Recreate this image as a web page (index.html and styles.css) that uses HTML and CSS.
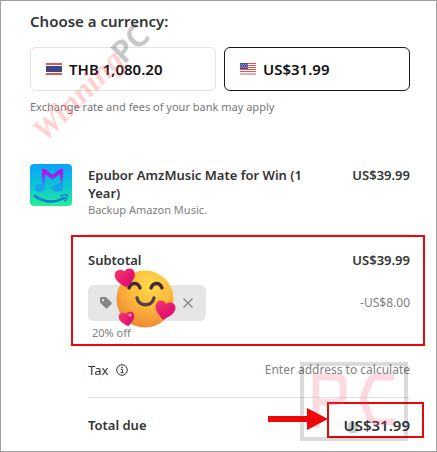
FILE: index.html
```html
<!DOCTYPE html>
<html lang="en">
<head>
<meta charset="utf-8">
<title>Order summary</title>
<link rel="stylesheet" href="styles.css">
</head>
<body>
<main class="checkout">
  <h1 class="heading">Choose a currency:</h1>
  <div class="currencies">
    <button class="currency" type="button">
      <svg class="flag" viewBox="0 0 16 12" aria-hidden="true">
        <rect width="16" height="12" fill="#e3544d"/><rect y="2" width="16" height="8" fill="#fff"/><rect y="3" width="16" height="6" fill="#3d4488"/>
      </svg>
      THB 1,080.20
    </button>
    <button class="currency selected" type="button">
      <svg class="flag" viewBox="0 0 16 12" aria-hidden="true">
        <rect width="16" height="12" fill="#fff"/>
        <path d="M0 .5h16M0 2.5h16M0 4.5h16M0 6.5h16M0 8.5h16M0 11h16" stroke="#e3544d"/>
        <rect width="8" height="6" fill="#4a5098"/>
        <path d="M1 1.500h7M0 3h8M1 4.500h7" stroke="#b9bcdd" stroke-width=".7" stroke-dasharray="1 1"/>
      </svg>
      US$31.99
    </button>
  </div>
  <p class="note">Exchange rate and fees of your bank may apply</p>

  <section class="item">
    <svg class="cover" viewBox="0 0 42 42" aria-hidden="true">
      <defs>
        <linearGradient id="coverBg" x2="0" y2="1"><stop stop-color="#08a4fb"/><stop offset=".55" stop-color="#0cc6d0"/><stop offset="1" stop-color="#29ed94"/></linearGradient>
        <linearGradient id="noteFill" gradientUnits="userSpaceOnUse" x1="0" y1="5" x2="0" y2="28"><stop stop-color="#d000f0"/><stop offset=".3" stop-color="#9a25ed"/><stop offset=".6" stop-color="#318de9"/><stop offset="1" stop-color="#16b0ee"/></linearGradient>
      </defs>
      <rect width="42" height="42" rx="4" fill="url(#coverBg)"/>
      <path d="M12 5h3l7.500 6L30 5h3v18h-3V10l-7.500 6L15 10v13h-3z" fill="url(#noteFill)"/>
      <ellipse cx="10" cy="24" rx="5.300" ry="4" fill="#18a3f0"/><ellipse cx="27.500" cy="24" rx="5.500" ry="4" fill="#18a3f0"/>
      <path d="M5 32q14 10 29 2" fill="none" stroke="#087cd4" stroke-width="2.400" stroke-linecap="round"/>
      <path d="M31 32q5-2 6-1t-2 6" fill="none" stroke="#087cd4" stroke-width="1.500" stroke-linecap="round"/>
    </svg>
    <div class="item-text">
      <h2 class="item-name">Epubor AmzMusic Mate for Win (1 Year)</h2>
      <p class="item-desc">Backup Amazon Music.</p>
    </div>
    <span class="strong">US$39.99</span>
  </section>

  <div class="totals">
    <section class="discounted">
      <div class="row subtotal"><span class="strong">Subtotal</span><span class="strong">US$39.99</span></div>
      <div class="row discount">
        <div class="chip">
          <svg class="tag" viewBox="0 0 14 14" aria-hidden="true"><path fill="#858585" fill-rule="evenodd" d="M1 2.500Q1 1 2.500 1H6q1 0 1.700.7l4.600 4.600q1 1 0 2L8.500 12q-1 1-2 0L1.700 7.300Q1 6.500 1 5.500zM4 3a1.100 1.100 0 1 0 .01 0z"/></svg>
          <button class="remove" type="button" aria-label="Remove discount">
            <svg viewBox="0 0 12 12" aria-hidden="true"><path d="M1.500 1.500l9 9M10.500 1.500l-9 9" stroke="#858585" stroke-width="1.300"/></svg>
          </button>
          <svg class="emoji" viewBox="0 0 62 60" aria-hidden="true">
            <defs>
              <radialGradient id="face" cx=".6" cy=".25" r=".8"><stop stop-color="#ffdc4d"/><stop offset=".5" stop-color="#fdb83a"/><stop offset="1" stop-color="#ee8433"/></radialGradient>
              <linearGradient id="heart" x2="1" y2="1"><stop stop-color="#f23b62"/><stop offset=".6" stop-color="#e61472"/><stop offset="1" stop-color="#bd1377"/></linearGradient>
              <path id="heartShape" d="M10 19C2 13 0 10 0 6C0 0 7-1 10 3C13-1 20 0 20 6C20 10 18 13 10 19z" fill="url(#heart)"/>
            </defs>
            <circle cx="29" cy="31" r="28.500" fill="url(#face)"/>
            <g fill="none" stroke="#4b2936" stroke-width="3.400" stroke-linecap="round">
              <path d="M13 20c2-6 9-6 11 0M35 20c2-6 9-6 11 0"/><path d="M21 30c2 9 15 9 17 0" stroke="#52404b"/>
            </g>
            <use href="#heartShape" transform="translate(-2 2) rotate(-8)"/>
            <use href="#heartShape" transform="translate(41 31) rotate(12)"/>
            <use href="#heartShape" transform="translate(2 45) rotate(-10) scale(.78)"/>
            <circle cx="14" cy="47" r="1.500" fill="#ff9ec0"/>
          </svg>
        </div>
        <span class="muted">-US$8.00</span>
      </div>
      <p class="percent">20% off</p>
    </section>
    <div class="row tax">
      <span class="tax-label">Tax
        <svg class="info" viewBox="0 0 12 12" aria-hidden="true"><circle cx="6" cy="6" r="5.300" fill="none" stroke="#333"/><path d="M4.700 5.300H6.300V8.500M4.500 8.700h3.200" fill="none" stroke="#333"/><circle cx="6" cy="3.400" r=".8" fill="#333"/></svg>
      </span>
      <span class="muted">Enter address to calculate</span>
    </div>
    <div class="row total">
      <span class="strong">Total due</span>
      <span class="amount">US$31.99</span>
      <svg class="stamp" viewBox="0 0 108 79" aria-hidden="true">
        <rect x="2" y="2" width="104" height="75" fill="none" stroke="#000" stroke-opacity=".14" stroke-width="4"/>
        <path d="M16 66V15H36Q43 15 43 22V33Q43 40 36 40H16" fill="none" stroke="#f04870" stroke-opacity=".2" stroke-width="7"/>
        <path d="M94 15H76Q72 15 70 19L64 34Q63 37 64 40L70 56Q72 60 76 60H94" fill="none" stroke="#f04870" stroke-opacity=".2" stroke-width="7"/>
        <rect x="48" y="60" width="10" height="11" rx="3" fill="#000" fill-opacity=".2"/>
      </svg>
      <svg class="arrow" viewBox="0 0 60 22" aria-hidden="true"><path d="M0 8H39V0L60 11L39 22V14H0z" fill="#ec0808"/></svg>
    </div>
  </div>

  <svg class="watermark" viewBox="0 0 130 130" aria-hidden="true">
    <text class="mark-script" transform="translate(18 123) rotate(-45)">Winning</text>
    <text class="mark-pc" transform="translate(97 45) rotate(-45)">PC</text>
  </svg>
</main>
</body>
</html>
```
FILE: styles.css
```css
* {
  box-sizing: border-box;
}

body {
  margin: 0;
  background: #fff;
  color: #333;
  font: 13px/20px "Noto Sans", "Open Sans", sans-serif;
}

h1, h2, p {
  margin: 0;
}

.checkout {
  position: relative;
  border: 1px solid #a0a0a0;
  padding: 8px 26px 16px 29px;
}

.heading {
  font-size: 15px;
  font-weight: 600;
  line-height: 24px;
}

.currencies {
  display: grid;
  grid-template-columns: 1fr 1fr;
  gap: 8px;
  margin-top: 14px;
}

.currency {
  display: flex;
  align-items: center;
  gap: 7px;
  height: 44px;
  padding: 0 15px;
  border: 1px solid #e3e3e3;
  border-radius: 6px;
  background: #fff;
  color: #111;
  font: 600 15px/20px "Noto Sans", "Open Sans", sans-serif;
}

.selected {
  border-color: #1a1a1a;
}

.flag {
  width: 16px;
  height: 12px;
}

.note {
  margin-top: 7px;
  color: #777;
  font-size: 11px;
  line-height: 18px;
}

.item {
  display: flex;
  align-items: flex-start;
  gap: 16px;
  margin-top: 48px;
}

.cover {
  flex: none;
  width: 42px;
  height: 42px;
}

.item-text {
  flex: 1;
  padding: 2px 16px 0 0;
}

.item-name, .strong {
  font-size: 13px;
  font-weight: 600;
  line-height: 18px;
}

.item > .strong {
  padding-top: 2px;
}

.item-desc, .percent {
  color: #808080;
  font-size: 11px;
  line-height: 16px;
}

.totals {
  margin: 16px 0 0 58px;
}

.row {
  display: flex;
  align-items: center;
  justify-content: space-between;
}

.discounted {
  position: relative;
  border-top: 1px solid #e3e3e3;
  padding-top: 15px;
}

.discounted::after {
  content: "";
  position: absolute;
  inset: 0 -15px -4px -17px;
  border: 2px solid #ec0808;
}

.subtotal {
  height: 20px;
}

.discount {
  margin-top: 15px;
}

.chip {
  position: relative;
  display: flex;
  align-items: center;
  justify-content: space-between;
  width: 118px;
  height: 36px;
  padding: 0 12px 0 11px;
  border-radius: 6px;
  background: #e6e6e6;
}

.tag {
  width: 14px;
  height: 14px;
}

.remove {
  width: 12px;
  height: 12px;
  padding: 0;
  border: 0;
  background: none;
}

.remove svg {
  display: block;
}

.emoji {
  position: absolute;
  top: -17px;
  left: 28px;
  width: 62px;
  height: 60px;
  overflow: visible;
}

.muted {
  color: #808080;
  font-size: 12px;
}

.percent {
  padding: 4px 0 1px 4px;
}

.tax {
  height: 56px;
  border-bottom: 1px solid #e3e3e3;
}

.tax-label {
  display: flex;
  align-items: center;
  gap: 8px;
}

.info {
  width: 12px;
  height: 12px;
}

.total {
  position: relative;
  margin-top: 17px;
}

.amount {
  position: relative;
  font-size: 15px;
  font-weight: 600;
}

.amount::after {
  content: "";
  position: absolute;
  inset: -13px -14px -3px -17px;
  border: 2px solid #ec0808;
}

.stamp {
  position: absolute;
  right: 2px;
  bottom: -6px;
  width: 108px;
  height: 79px;
}

.arrow {
  position: absolute;
  right: 82px;
  top: -7px;
  width: 60px;
  height: 22px;
}

.watermark {
  position: absolute;
  top: 19px;
  left: 26px;
  width: 130px;
  height: 130px;
  overflow: visible;
  pointer-events: none;
}

.mark-script {
  fill: #f44;
  fill-opacity: .25;
  font: italic 700 32px "Liberation Serif", serif;
}

.mark-pc {
  fill: #000;
  fill-opacity: .22;
  font: 700 31px "Noto Sans", sans-serif;
}
```
